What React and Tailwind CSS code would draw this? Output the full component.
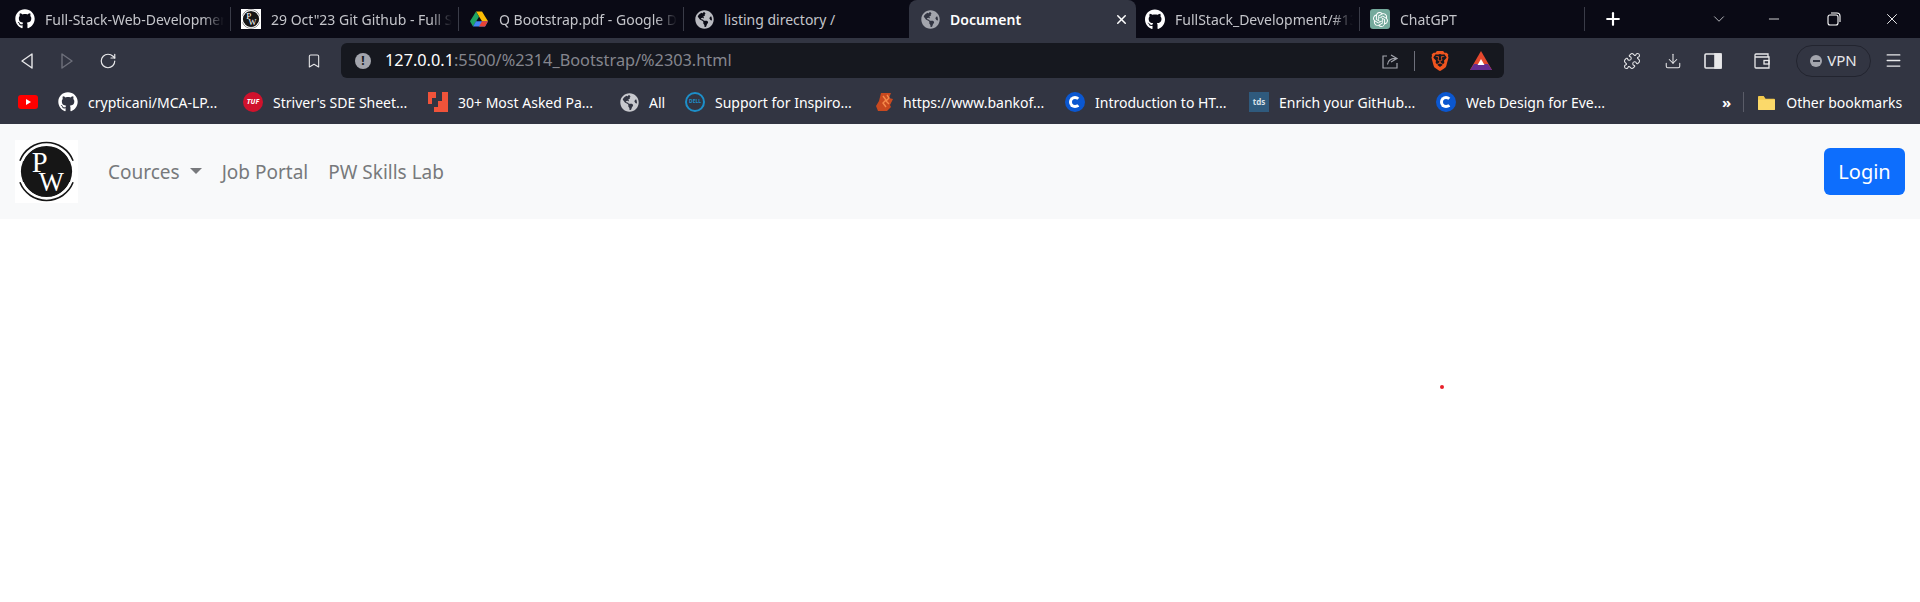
import { Bookmark, ChevronDown, Download, Menu, Minus, Plus, Puzzle, RotateCw, X } from 'lucide-react'
import { FaGithub, FaGlobeAmericas } from 'react-icons/fa'
import { SiBrave, SiOpenai } from 'react-icons/si'

const fade = '[mask-image:linear-gradient(to_right,black_88%,transparent)]'

function PwLogo({ className, small }) {
  return (
    <svg viewBox="0 0 64 64" className={`bg-white shrink-0 ${className}`}>
      <circle cx="32" cy="32" r="26" fill="#161616" />
      <path d="M5 21A29 29 0 0 1 59 21M5 43A29 29 0 0 0 59 43" fill="none" stroke="#161616" strokeWidth="1.6" />
      <path d="M8 21A26 26 0 0 1 56 21M8 43A26 26 0 0 0 56 43" fill="none" stroke="#fff" strokeWidth={small ? 2 : 1.4} />
      <text x="17" y="33" fill="#fff" fontSize="29" fontFamily="Liberation Serif, serif">P</text>
      <text x="24" y="52" fill="#fff" fontSize="27" fontFamily="Liberation Serif, serif">W</text>
    </svg>
  )
}

function DriveIcon() {
  return (
    <svg viewBox="0 0 24 22" className="w-[18px] h-[18px] shrink-0">
      <path d="M8 1h8l8 13h-8z" fill="#fbbc04" />
      <path d="M8 1l4 7-8 13-4-7z" fill="#1fa463" />
      <path d="M8 14h16l-4 7H4z" fill="#4285f4" />
      <path d="M16 14h8l-4 7h-8z" fill="#ea4335" />
    </svg>
  )
}

function Tab({ icon, title, className }) {
  return (
    <div className={`h-[24px] flex items-center border-r border-[#3a3c48] shrink-0 ${className}`}>
      <span className="w-[20px] flex justify-center shrink-0">{icon}</span>
      <span className={`ml-[10px] flex-1 min-w-0 mr-[6px] overflow-hidden whitespace-nowrap text-[14px] text-[#c4c5ca] ${fade}`}>{title}</span>
    </div>
  )
}

function TriangleIcon({ flip, className }) {
  return (
    <svg viewBox="0 0 14 18" className={`w-[14px] h-[18px] ${className}`} fill="none" stroke="currentColor" strokeWidth="1.4" strokeLinejoin="round">
      <path d={flip ? 'M2 2l10 7-10 7z' : 'M12 2L2 9l10 7z'} />
    </svg>
  )
}

function CoursIcon() {
  return (
    <span className="w-[20px] h-[20px] rounded-full bg-[#0b57d0] flex items-center justify-center shrink-0">
      <span className="w-[12px] h-[12px] rounded-full border-[3px] border-white border-r-transparent" />
    </span>
  )
}

const bookmarks = [
  {
    w: 'w-[40px]',
    icon: (
      <span className="w-[20px] h-[14px] rounded-[3px] bg-[#f00] flex items-center justify-center">
        <span className="w-0 h-0 border-y-[3px] border-y-transparent border-l-[5px] border-l-white" />
      </span>
    ),
  },
  { w: 'w-[185px]', icon: <FaGithub className="w-[20px] h-[20px] text-white" />, label: 'crypticani/MCA-LP...' },
  {
    w: 'w-[185px]',
    icon: (
      <span className="w-[20px] h-[20px] rounded-full bg-[#d0122c] flex items-center justify-center text-[7px] font-bold italic text-white">TUF</span>
    ),
    label: "Striver's SDE Sheet...",
  },
  {
    w: 'w-[191px]',
    icon: (
      <svg viewBox="0 0 20 20" className="w-[20px] h-[20px]">
        <path d="M0 0h8v6H4v6H0zM14 0h6v20H6v-5h4V9h4z" fill="#f0533a" />
      </svg>
    ),
    label: '30+ Most Asked Pa...',
  },
  { w: 'w-[66px]', icon: <FaGlobeAmericas className="w-[19px] h-[19px] text-[#c8c9ce]" />, label: 'All' },
  {
    w: 'w-[190px]',
    icon: (
      <span className="w-[20px] h-[20px] rounded-full border-[2px] border-[#1d8fc9] flex items-center justify-center text-[5px] font-bold text-[#1d8fc9]">DELL</span>
    ),
    label: 'Support for Inspiro...',
  },
  {
    w: 'w-[190px]',
    gap: 'ml-[8px]',
    icon: (
      <svg viewBox="0 0 18 20" className="w-[18px] h-[20px]">
        <path d="M5 1h10l-2 5 4 1-3 6 1 2-4 4H2L0 14l3-5z" fill="#c9491f" />
        <path d="M7 4l3 4-3 3 3 4M11 3l2 3-3 3 3 3" fill="none" stroke="#f58a4a" strokeWidth="1.4" />
      </svg>
    ),
    label: 'https://www.bankof...',
  },
  { w: 'w-[184px]', icon: <CoursIcon />, label: 'Introduction to HT...' },
  {
    w: 'w-[187px]',
    icon: (
      <span className="w-[20px] h-[20px] bg-[#2f5a7d] flex items-center justify-center text-[8px] font-bold text-[#d8e0e8]">tds</span>
    ),
    label: 'Enrich your GitHub...',
  },
  { w: 'w-[286px]', icon: <CoursIcon />, label: 'Web Design for Eve...' },
]

export default function App() {
  return (
    <div className="relative min-h-[602px] bg-white font-['Noto_Sans',sans-serif]">
      {/* tab strip */}
      <div className="h-[38px] bg-[#0a0a15] flex items-center">
        <div className="w-[15px] shrink-0" />
        <Tab className="w-[216px]" icon={<FaGithub className="w-[20px] h-[20px] text-white" />} title="Full-Stack-Web-Development" />
        <div className="w-[10px] shrink-0" />
        <Tab className="w-[218px]" icon={<PwLogo className="w-[20px] h-[20px]" small />} title={'29 Oct"23 Git Github - Full Stack'} />
        <div className="w-[10px] shrink-0" />
        <Tab className="w-[215px]" icon={<DriveIcon />} title="Q Bootstrap.pdf - Google Drive" />
        <div className="w-[10px] shrink-0" />
        <div className="w-[215px] h-[24px] flex items-center shrink-0">
          <span className="w-[20px] flex justify-center shrink-0"><FaGlobeAmericas className="w-[19px] h-[19px] text-[#b9bac0]" /></span>
          <span className="ml-[10px] text-[14px] text-[#c4c5ca] whitespace-nowrap">listing directory /</span>
        </div>
        <div className="w-[227px] h-[38px] mt-auto bg-[#323542] rounded-t-[8px] flex items-center pl-[12px] pr-[7px] shrink-0">
          <FaGlobeAmericas className="w-[19px] h-[19px] text-[#a3a5ad] shrink-0" />
          <span className="ml-[10px] flex-1 text-[14px] font-semibold text-white">Document</span>
          <X className="w-[15px] h-[15px] text-white" strokeWidth={2.4} />
        </div>
        <div className="w-[9px] shrink-0" />
        <Tab className="w-[215px]" icon={<FaGithub className="w-[21px] h-[21px] text-white" />} title="FullStack_Development/#13" />
        <div className="w-[10px] shrink-0" />
        <Tab
          className="w-[215px]"
          icon={
            <span className="w-[20px] h-[20px] rounded-[3px] bg-[#74aa9c] flex items-center justify-center">
              <SiOpenai className="w-[15px] h-[15px] text-white" />
            </span>
          }
          title="ChatGPT"
        />
        <Plus className="ml-[18px] w-[20px] h-[20px] text-white" strokeWidth={2.6} />
        <ChevronDown className="ml-[87px] w-[18px] h-[18px] text-[#c4c5ca]" strokeWidth={1.2} />
        <Minus className="ml-[38px] w-[16px] h-[16px] text-white" strokeWidth={1.2} />
        <svg viewBox="0 0 14 14" className="ml-[45px] w-[14px] h-[14px] text-white" fill="none" stroke="currentColor" strokeWidth="1.1">
          <rect x="1" y="3" width="10" height="10" rx="2" />
          <path d="M4 1h6a3 3 0 0 1 3 3v6" />
        </svg>
        <X className="ml-[42px] w-[18px] h-[18px] text-white" strokeWidth={1.2} />
      </div>

      {/* toolbar */}
      <div className="h-[45px] bg-[#323542] flex items-center text-[#e8e8ea]">
        <TriangleIcon className="ml-[20px]" />
        <TriangleIcon flip className="ml-[26px] text-[#6e707b]" />
        <RotateCw className="ml-[25px] w-[18px] h-[18px]" strokeWidth={1.6} />
        <Bookmark className="ml-[189px] w-[16px] h-[18px]" strokeWidth={1.6} />
        <div className="ml-[19px] w-[1163px] h-[35px] rounded-[6px] bg-[#16181f] flex items-center pl-[14px] pr-[12px]">
          <span className="w-[16px] h-[16px] rounded-full bg-[#a3a5ad] text-[#16181f] text-[12px] font-bold leading-[16px] text-center">!</span>
          <span className="ml-[14px] flex-1 text-[16.3px] whitespace-nowrap text-[#85868e]">
            <span className="text-white">127.0.0.1</span>:5500/%2314_Bootstrap/%2303.html
          </span>
          <svg viewBox="0 0 18 18" className="w-[18px] h-[18px] text-[#a3a5ad]" fill="none" stroke="currentColor" strokeWidth="1.2">
            <path d="M6 4H2v12h14v-5M10 3l6 3.5-6 3.5M16 6.5c-6-.5-9 2-9.5 6" />
          </svg>
          <span className="ml-[15px] w-px h-[20px] bg-[#6e707b]" />
          <SiBrave className="ml-[15px] w-[20px] h-[22px] text-[#f1551f]" />
          <svg viewBox="0 0 22 22" className="ml-[20px] w-[22px] h-[22px]">
            <path d="M11 1l11 19H0z" fill="#e5482d" />
            <path d="M0 20l4-6h14l4 6z" fill="#662d91" />
            <path d="M11 9l3.5 6h-7z" fill="#fff" />
          </svg>
        </div>
        <Puzzle className="ml-[119px] w-[18px] h-[18px]" strokeWidth={1.4} />
        <Download className="ml-[23px] w-[18px] h-[18px]" strokeWidth={1.4} />
        <svg viewBox="0 0 18 18" className="ml-[22px] w-[18px] h-[18px]" fill="none" stroke="currentColor" strokeWidth="1.6">
          <rect x="1" y="2" width="16" height="14" rx="1" />
          <rect x="11" y="2" width="6" height="14" fill="currentColor" />
        </svg>
        <svg viewBox="0 0 18 18" className="ml-[31px] w-[18px] h-[18px]" fill="none" stroke="currentColor" strokeWidth="1.3">
          <path d="M15 5V2H3a1 1 0 0 0-1 1v12a1 1 0 0 0 1 1h13V5H2" />
          <rect x="11" y="8.5" width="5" height="3.5" />
        </svg>
        <div className="ml-[25px] w-[75px] h-[32px] rounded-full border border-[#22242f] flex items-center justify-center gap-[5px]">
          <span className="w-[12px] h-[12px] rounded-full bg-[#a3a5ad] flex items-center justify-center">
            <span className="w-[7px] h-[2px] bg-[#323542]" />
          </span>
          <span className="text-[15px]">VPN</span>
        </div>
        <Menu className="ml-[13px] w-[19px] h-[19px]" strokeWidth={1.6} />
      </div>

      {/* bookmarks bar */}
      <div className="h-[41px] pb-[3px] bg-[#323542] flex items-center pl-[18px] text-[14px] text-white">
        {bookmarks.map((b, i) => (
          <div key={i} className={`${b.w} flex items-center shrink-0 whitespace-nowrap`}>
            <span className="w-[20px] flex justify-center shrink-0">{b.icon}</span>
            {b.label && <span className={b.gap || 'ml-[10px]'}>{b.label}</span>}
          </div>
        ))}
        <span className="text-[15px] font-bold leading-none">»</span>
        <span className="ml-[12px] w-px h-[20px] bg-[#5a5c68]" />
        <svg viewBox="0 0 20 18" className="ml-[13px] w-[19px] h-[17px]">
          <path d="M1 3a1 1 0 0 1 1-1h5l2 3h9a1 1 0 0 1 1 1v10a1 1 0 0 1-1 1H2a1 1 0 0 1-1-1z" fill="#f2c94c" />
          <path d="M1 6h18v10a1 1 0 0 1-1 1H2a1 1 0 0 1-1-1z" fill="#fbd96a" />
        </svg>
        <span className="ml-[10px] whitespace-nowrap">Other bookmarks</span>
      </div>

      {/* page navbar */}
      <nav className="h-[95px] bg-[#f8f9fa] flex items-center pl-[15px] pr-[15px]">
        <PwLogo className="w-[63px] h-[63px]" />
        <a className="ml-[30px] mt-[2px] text-[19px] text-[#77797c]">Cources</a>
        <span className="ml-[10px] mt-[-2px] w-0 h-0 border-x-[6px] border-x-transparent border-t-[6px] border-t-[#77797c]" />
        <a className="ml-[20px] mt-[2px] text-[19px] text-[#77797c]">Job Portal</a>
        <a className="ml-[20px] mt-[2px] text-[19px] text-[#77797c]">PW Skills Lab</a>
        <button className="ml-auto w-[81px] h-[47px] rounded-[6px] bg-[#0d6efd] text-white text-[20px]">Login</button>
      </nav>

      {/* stray cursor dot */}
      <span className="absolute left-[1440px] top-[385px] w-[4px] h-[4px] rounded-full bg-[#e8202a]" />
    </div>
  )
}
